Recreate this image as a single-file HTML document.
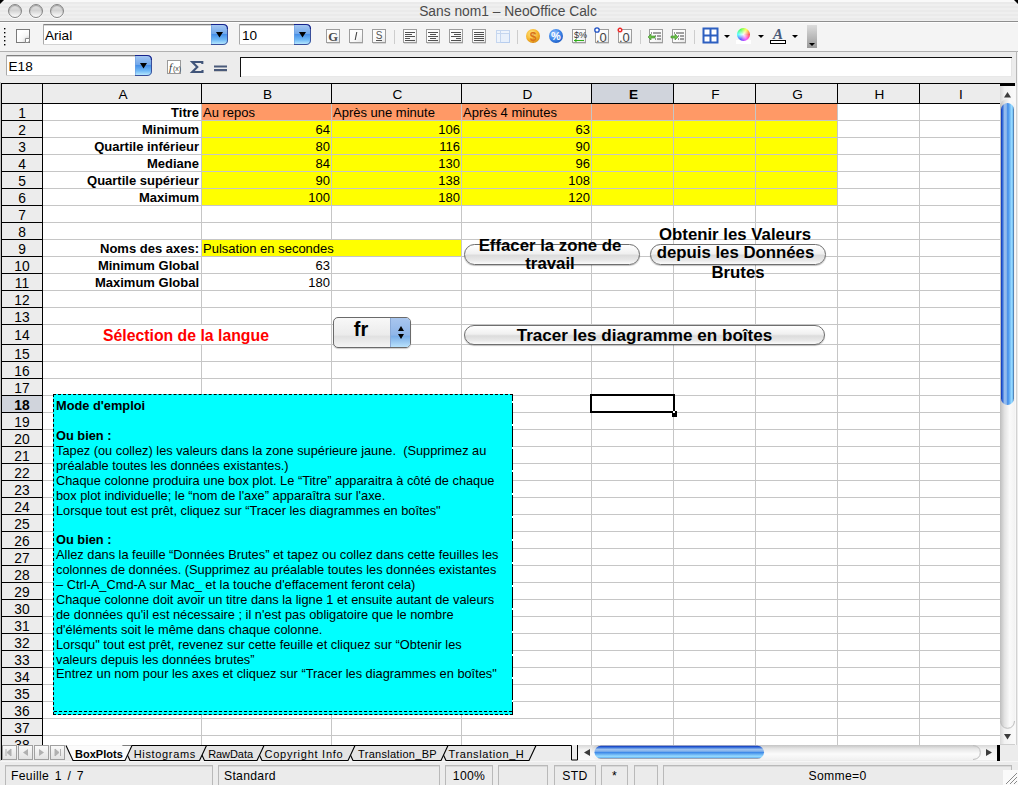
<!DOCTYPE html><html><head><meta charset="utf-8"><style>
*{margin:0;padding:0;box-sizing:border-box}
body{width:1018px;height:785px;overflow:hidden;position:relative;background:#ececec;font-family:"Liberation Sans",sans-serif;}
div,span{position:absolute}
.t{white-space:pre;line-height:17px;font-size:13px;color:#000}
.b{font-weight:bold}
.r{text-align:right}
.c{text-align:center}
.hl{background:#000}
.gl{background:#c6c6c6}
</style></head><body>
<div style="left:0;top:0;width:1018px;height:21px;background:repeating-linear-gradient(#efefef 0,#efefef 2px,#eaeaea 2px,#eaeaea 4px)"></div>
<div style="left:0;top:0;width:1018px;height:2px;background:#f9f9f9"></div>
<div style="left:0;top:21px;width:1018px;height:1px;background:#8e8e8e"></div>
<div style="left:8px;top:4px;width:14px;height:14px;border-radius:50%;background:linear-gradient(#e4e4e4 0%,#d2d2d2 45%,#e6e6e6 70%,#fbfbfb 100%);border:1px solid #858585;box-shadow:inset 0 1px 1px rgba(0,0,0,.3),0 1px 0 rgba(255,255,255,.8)"></div>
<div style="left:29px;top:4px;width:14px;height:14px;border-radius:50%;background:linear-gradient(#e4e4e4 0%,#d2d2d2 45%,#e6e6e6 70%,#fbfbfb 100%);border:1px solid #858585;box-shadow:inset 0 1px 1px rgba(0,0,0,.3),0 1px 0 rgba(255,255,255,.8)"></div>
<div style="left:50px;top:4px;width:14px;height:14px;border-radius:50%;background:linear-gradient(#e4e4e4 0%,#d2d2d2 45%,#e6e6e6 70%,#fbfbfb 100%);border:1px solid #858585;box-shadow:inset 0 1px 1px rgba(0,0,0,.3),0 1px 0 rgba(255,255,255,.8)"></div>
<div class="t" style="left:-1px;top:3px;width:1018px;text-align:center;font-size:13.8px;color:#4a4a4a">Sans nom1 – NeoOffice Calc</div>
<div style="left:0;top:0;width:0;height:0;border-top:4px solid #000;border-right:4px solid transparent"></div>
<div style="left:1014px;top:0;width:0;height:0;border-top:4px solid #000;border-left:4px solid transparent"></div>
<div style="left:0;top:22px;width:1018px;height:29px;background:#f4f4f4;border-top:1px solid #fdfdfd"></div>
<div style="left:0;top:51px;width:1018px;height:1px;background:#b0b0b0"></div>
<div style="left:0;top:52px;width:1016px;height:31px;background:#ececec"></div>
<div style="left:1016px;top:51px;width:1px;height:33px;background:#b8b8b8"></div>
<div style="left:1017px;top:52px;width:1px;height:31px;background:#f4f4f4"></div>
<svg style="position:absolute;left:0;top:0" width="1018" height="85" viewBox="0 0 1018 85" font-family="Liberation Sans"><defs><linearGradient id="aqua" x1="0" y1="0" x2="0" y2="1"><stop offset="0" stop-color="#a9c9f2"/><stop offset=".48" stop-color="#6fa6ea"/><stop offset=".5" stop-color="#4790e8"/><stop offset=".75" stop-color="#6fb8f6"/><stop offset="1" stop-color="#c6f2ff"/></linearGradient><radialGradient id="docbg" cx="1" cy="1" r="1"><stop offset="0" stop-color="#fff"/><stop offset=".35" stop-color="#dcdcdc"/><stop offset=".6" stop-color="#f6f6f6"/><stop offset="1" stop-color="#fff"/></radialGradient><linearGradient id="btnbg" x1="0" y1="0" x2="1" y2="1"><stop offset="0" stop-color="#fff"/><stop offset=".6" stop-color="#fafafa"/><stop offset="1" stop-color="#e4e4e4"/></linearGradient><radialGradient id="coin" cx=".4" cy=".35" r=".7"><stop offset="0" stop-color="#ffe98a"/><stop offset=".6" stop-color="#f7b730"/><stop offset="1" stop-color="#d88a10"/></radialGradient><radialGradient id="pct" cx=".4" cy=".35" r=".7"><stop offset="0" stop-color="#9cc6ff"/><stop offset=".6" stop-color="#3e86e8"/><stop offset="1" stop-color="#1b58c0"/></radialGradient><linearGradient id="tabg" x1="0" y1="0" x2="0" y2="1"><stop offset="0" stop-color="#dcdcdc"/><stop offset="1" stop-color="#9a9a9a"/></linearGradient><radialGradient id="wheel" cx=".35" cy=".3" r=".8"><stop offset="0" stop-color="#fff"/><stop offset=".3" stop-color="#f6c6ff"/><stop offset=".6" stop-color="#9fd6ff"/><stop offset="1" stop-color="#f0a050"/></radialGradient></defs><rect x="4" y="28" width="1.4" height="1.4" fill="#000"/><rect x="4" y="32" width="1.4" height="1.4" fill="#000"/><rect x="4" y="36" width="1.4" height="1.4" fill="#000"/><rect x="4" y="40" width="1.4" height="1.4" fill="#000"/><rect x="4" y="44" width="1.4" height="1.4" fill="#000"/><rect x="16.5" y="29.5" width="13" height="13" fill="url(#docbg)" stroke="#7a7a7a"/><path d="M25.5 42.5 V38.5 H29.5 V41 L28 42.5 Z" fill="#fff" stroke="#8a8a8a"/><rect x="43" y="24" width="168" height="21" fill="#fff"/><rect x="43" y="24" width="168" height="1" fill="#7f7f7f"/><rect x="43" y="25" width="168" height="1" fill="#d6d6d6"/><rect x="43" y="24" width="1" height="21" fill="#a9a9a9"/><rect x="43" y="44" width="168" height="1" fill="#d2d2d2"/><path d="M211 24 H223 Q228 24 228 29 V40 Q228 45 223 45 H211 Z" fill="url(#aqua)"/><path d="M211 24.5 H223 Q227.5 24.5 227.5 29" fill="none" stroke="#16238a" stroke-width="1.2"/><path d="M227.5 29 V40 Q227.5 44.5 223 44.5 H211" fill="none" stroke="#3a4f9a" stroke-width="1"/><rect x="211" y="25" width="1" height="19" fill="#6d9fe0" opacity=".6"/><path d="M216.0 32.0 H223.0 L219.5 37.5 Z" fill="#000"/><text x="45" y="39.5" font-size="13.6" fill="#000">Arial</text><rect x="239" y="24" width="55" height="21" fill="#fff"/><rect x="239" y="24" width="55" height="1" fill="#7f7f7f"/><rect x="239" y="25" width="55" height="1" fill="#d6d6d6"/><rect x="239" y="24" width="1" height="21" fill="#a9a9a9"/><rect x="239" y="44" width="55" height="1" fill="#d2d2d2"/><path d="M294 24 H306 Q311 24 311 29 V40 Q311 45 306 45 H294 Z" fill="url(#aqua)"/><path d="M294 24.5 H306 Q310.5 24.5 310.5 29" fill="none" stroke="#16238a" stroke-width="1.2"/><path d="M310.5 29 V40 Q310.5 44.5 306 44.5 H294" fill="none" stroke="#3a4f9a" stroke-width="1"/><rect x="294" y="25" width="1" height="19" fill="#6d9fe0" opacity=".6"/><path d="M299.0 32.0 H306.0 L302.5 37.5 Z" fill="#000"/><text x="242" y="39.5" font-size="13.6" fill="#000">10</text><rect x="326.5" y="29.5" width="13" height="13" fill="url(#btnbg)" stroke="#9d9d9d"/><rect x="327" y="43" width="13" height="1" fill="#000" opacity=".12"/><text x="333" y="40.5" font-size="12.5" font-weight="bold" font-family="Liberation Serif" text-anchor="middle" fill="#4a4a4a">G</text><rect x="349.5" y="29.5" width="13" height="13" fill="url(#btnbg)" stroke="#9d9d9d"/><rect x="350" y="43" width="13" height="1" fill="#000" opacity=".12"/><path d="M356.8 32 L355.2 40" stroke="#444" stroke-width="1.1"/><rect x="372.5" y="29.5" width="13" height="13" fill="url(#btnbg)" stroke="#9d9d9d"/><rect x="373" y="43" width="13" height="1" fill="#000" opacity=".12"/><text x="379" y="39" font-size="10" text-anchor="middle" fill="#555">S</text><rect x="376" y="40" width="6" height="1" fill="#555"/><rect x="394" y="30" width="1" height="14" fill="#cdcdcd"/><rect x="517" y="30" width="1" height="14" fill="#cdcdcd"/><rect x="640" y="30" width="1" height="14" fill="#cdcdcd"/><rect x="694" y="30" width="1" height="14" fill="#cdcdcd"/><rect x="403.5" y="29.5" width="13" height="13" fill="url(#btnbg)" stroke="#9d9d9d"/><rect x="404" y="43" width="13" height="1" fill="#000" opacity=".12"/><rect x="405" y="32" width="10" height="1" fill="#505050"/><rect x="405" y="34" width="7" height="1" fill="#505050"/><rect x="405" y="36" width="10" height="1" fill="#505050"/><rect x="405" y="38" width="5" height="1" fill="#505050"/><rect x="405" y="40" width="10" height="1" fill="#505050"/><rect x="426.5" y="29.5" width="13" height="13" fill="url(#btnbg)" stroke="#9d9d9d"/><rect x="427" y="43" width="13" height="1" fill="#000" opacity=".12"/><rect x="428" y="32" width="10" height="1" fill="#505050"/><rect x="430" y="34" width="6" height="1" fill="#505050"/><rect x="428" y="36" width="10" height="1" fill="#505050"/><rect x="430" y="38" width="6" height="1" fill="#505050"/><rect x="428" y="40" width="10" height="1" fill="#505050"/><rect x="449.5" y="29.5" width="13" height="13" fill="url(#btnbg)" stroke="#9d9d9d"/><rect x="450" y="43" width="13" height="1" fill="#000" opacity=".12"/><rect x="451" y="32" width="10" height="1" fill="#505050"/><rect x="454" y="34" width="7" height="1" fill="#505050"/><rect x="451" y="36" width="10" height="1" fill="#505050"/><rect x="456" y="38" width="5" height="1" fill="#505050"/><rect x="451" y="40" width="10" height="1" fill="#505050"/><rect x="472.5" y="29.5" width="13" height="13" fill="url(#btnbg)" stroke="#9d9d9d"/><rect x="473" y="43" width="13" height="1" fill="#000" opacity=".12"/><rect x="474" y="32" width="10" height="1" fill="#505050"/><rect x="474" y="34" width="10" height="1" fill="#505050"/><rect x="474" y="36" width="10" height="1" fill="#505050"/><rect x="474" y="38" width="10" height="1" fill="#505050"/><rect x="474" y="40" width="10" height="1" fill="#505050"/><rect x="496.5" y="30.5" width="13" height="12" fill="#eef4fc" stroke="#c5d6ef"/><rect x="500.5" y="33.5" width="9" height="9" fill="#e8f0fb" stroke="#b7cdee"/><path d="M496.5 33.5 H509.5 M500.5 30.5 V42.5" stroke="#c5d6ef"/><circle cx="533" cy="36" r="7" fill="url(#coin)"/><text x="533" y="40.5" font-size="12" font-weight="bold" text-anchor="middle" fill="#d8731a">$</text><circle cx="556" cy="36" r="7" fill="url(#pct)"/><text x="556" y="40" font-size="11" font-weight="bold" text-anchor="middle" fill="#fff">%</text><rect x="572.5" y="29.5" width="13" height="13" fill="url(#btnbg)" stroke="#9d9d9d"/><rect x="573" y="43" width="13" height="1" fill="#000" opacity=".12"/><text x="574" y="38" font-size="9" fill="#333">$%</text><rect x="574" y="40" width="10" height="1" fill="#2fae1a"/><path d="M574 40.5 L576.5 38.5 V42.5 Z" fill="#2fae1a"/><rect x="595.5" y="29.5" width="13" height="13" fill="url(#btnbg)" stroke="#9d9d9d"/><rect x="596" y="43" width="13" height="1" fill="#000" opacity=".12"/><text x="596" y="41.5" font-size="13" fill="#444">.0</text><circle cx="597" cy="30" r="2.2" fill="#fff" stroke="#1d4fc4" stroke-width="1.3"/><rect x="618.5" y="29.5" width="13" height="13" fill="url(#btnbg)" stroke="#9d9d9d"/><rect x="619" y="43" width="13" height="1" fill="#000" opacity=".12"/><text x="619" y="41.5" font-size="13" fill="#444">.0</text><circle cx="620" cy="30" r="2.5" fill="#e22"/><path d="M618.8 28.8 L621.2 31.2 M621.2 28.8 L618.8 31.2" stroke="#fff" stroke-width=".8"/><rect x="649.5" y="29.5" width="13" height="13" fill="url(#btnbg)" stroke="#9d9d9d"/><rect x="650" y="43" width="13" height="1" fill="#000" opacity=".12"/><rect x="651" y="32.5" width="1" height="1" fill="#333"/><rect x="653" y="32.5" width="8" height="1" fill="#444"/><rect x="655" y="35.5" width="1" height="1" fill="#333"/><rect x="657" y="35.5" width="4" height="1" fill="#444"/><rect x="655" y="38.5" width="1" height="1" fill="#333"/><rect x="657" y="38.5" width="4" height="1" fill="#444"/><path d="M655 36 H651 V34 L648 37 L651 40 V38 H655 Z" fill="#6cc24a" stroke="#3e8a2a" stroke-width=".6"/><rect x="672.5" y="29.5" width="13" height="13" fill="url(#btnbg)" stroke="#9d9d9d"/><rect x="673" y="43" width="13" height="1" fill="#000" opacity=".12"/><rect x="674" y="32.5" width="1" height="1" fill="#333"/><rect x="676" y="32.5" width="8" height="1" fill="#444"/><rect x="678" y="35.5" width="1" height="1" fill="#333"/><rect x="680" y="35.5" width="4" height="1" fill="#444"/><rect x="678" y="38.5" width="1" height="1" fill="#333"/><rect x="680" y="38.5" width="4" height="1" fill="#444"/><path d="M671 36 H675 V34 L678 37 L675 40 V38 H671 Z" fill="#6cc24a" stroke="#3e8a2a" stroke-width=".6"/><rect x="703.5" y="28.5" width="14" height="14" fill="#fff" stroke="#2d5fc0" stroke-width="2"/><path d="M710.5 28 V43 M703 35.5 H718" stroke="#2d5fc0" stroke-width="2"/><path d="M724 35 H730 L727 38 Z" fill="#000"/><path d="M758 35 H764 L761 38 Z" fill="#000"/><path d="M792 35 H798 L795 38 Z" fill="#000"/><rect x="736" y="40" width="15" height="4" fill="#fff"/><text x="778" y="39" font-size="15" font-style="italic" font-weight="bold" font-family="Liberation Serif" text-anchor="middle" fill="#4a5a78">A</text><rect x="770.5" y="40.5" width="15" height="3" fill="#fff" stroke="#000"/><rect x="807" y="25" width="10" height="23" fill="url(#tabg)"/><path d="M809 43 H815 L812 46 Z" fill="#000"/><rect x="6" y="55" width="129" height="21" fill="#fff"/><rect x="6" y="55" width="129" height="1" fill="#7f7f7f"/><rect x="6" y="56" width="129" height="1" fill="#d6d6d6"/><rect x="6" y="55" width="1" height="21" fill="#a9a9a9"/><rect x="6" y="75" width="129" height="1" fill="#d2d2d2"/><path d="M135 55 H147 Q152 55 152 60 V71 Q152 76 147 76 H135 Z" fill="url(#aqua)"/><path d="M135 55.5 H147 Q151.5 55.5 151.5 60" fill="none" stroke="#16238a" stroke-width="1.2"/><path d="M151.5 60 V71 Q151.5 75.5 147 75.5 H135" fill="none" stroke="#3a4f9a" stroke-width="1"/><rect x="135" y="56" width="1" height="19" fill="#6d9fe0" opacity=".6"/><path d="M140.0 63.0 H147.0 L143.5 68.5 Z" fill="#000"/><text x="8.5" y="70.5" font-size="13.6" fill="#000">E18</text><rect x="167.5" y="60.5" width="13" height="13" fill="#fff" stroke="#9a9a9a"/><text x="169" y="71" font-size="11" font-style="italic" font-family="Liberation Serif" fill="#333">f</text><text x="173" y="70.5" font-size="7" fill="#444">(x)</text><path d="M202.3 64 V62 H192.3 L197.3 67 L192.3 72 H202.5 V70" fill="none" stroke="#41557a" stroke-width="2.1" stroke-linejoin="miter"/><rect x="214" y="65.5" width="13" height="2" fill="#4a5a7a"/><rect x="214" y="69" width="13" height="2" fill="#4a5a7a"/><rect x="214" y="71" width="13" height="1" fill="#c8c8c8"/><rect x="240" y="57" width="772" height="20" fill="#fff"/><rect x="240" y="57" width="772" height="1" fill="#111"/><rect x="240" y="57" width="1" height="20" fill="#111"/><rect x="1011" y="58" width="1" height="19" fill="#e4e4e4"/><rect x="241" y="76" width="771" height="1" fill="#e8e8e8"/></svg>
<div style="left:736.5px;top:27.5px;width:13px;height:13px;border-radius:50%;background:conic-gradient(from 90deg,#ff4040,#ff40ff,#4040ff,#40ffff,#40ff40,#ffff40,#ff4040)"></div>
<div style="left:736.5px;top:27.5px;width:13px;height:13px;border-radius:50%;background:radial-gradient(circle at 50% 50%,rgba(255,255,255,.95) 0,rgba(255,255,255,.5) 35%,rgba(255,255,255,0) 70%,rgba(0,0,0,.12) 100%)"></div>
<div style="left:1px;top:83px;width:999px;height:21px;background:#ececec"></div>
<div style="left:1px;top:103px;width:42px;height:642px;background:#ececec"></div>
<div style="left:43px;top:104px;width:957px;height:641px;background:#fff"></div>
<div style="left:592px;top:84px;width:81px;height:19px;background:#d0d4dc"></div>
<div style="left:2px;top:396px;width:40px;height:16px;background:#d0d4dc"></div>
<div style="left:201px;top:103px;width:636px;height:17px;background:#ff9966"></div>
<div style="left:201px;top:120px;width:636px;height:85px;background:#ffff00"></div>
<div style="left:201px;top:239px;width:260px;height:17px;background:#ffff00"></div>
<div class="gl" style="left:43px;top:120px;width:957px;height:1px"></div>
<div class="gl" style="left:43px;top:137px;width:957px;height:1px"></div>
<div class="gl" style="left:43px;top:154px;width:957px;height:1px"></div>
<div class="gl" style="left:43px;top:171px;width:957px;height:1px"></div>
<div class="gl" style="left:43px;top:188px;width:957px;height:1px"></div>
<div class="gl" style="left:43px;top:205px;width:957px;height:1px"></div>
<div class="gl" style="left:43px;top:222px;width:957px;height:1px"></div>
<div class="gl" style="left:43px;top:239px;width:957px;height:1px"></div>
<div class="gl" style="left:43px;top:256px;width:957px;height:1px"></div>
<div class="gl" style="left:43px;top:273px;width:957px;height:1px"></div>
<div class="gl" style="left:43px;top:290px;width:957px;height:1px"></div>
<div class="gl" style="left:43px;top:307px;width:957px;height:1px"></div>
<div class="gl" style="left:43px;top:324px;width:957px;height:1px"></div>
<div class="gl" style="left:43px;top:344px;width:957px;height:1px"></div>
<div class="gl" style="left:43px;top:361px;width:957px;height:1px"></div>
<div class="gl" style="left:43px;top:378px;width:957px;height:1px"></div>
<div class="gl" style="left:43px;top:395px;width:957px;height:1px"></div>
<div class="gl" style="left:43px;top:412px;width:957px;height:1px"></div>
<div class="gl" style="left:43px;top:429px;width:957px;height:1px"></div>
<div class="gl" style="left:43px;top:446px;width:957px;height:1px"></div>
<div class="gl" style="left:43px;top:463px;width:957px;height:1px"></div>
<div class="gl" style="left:43px;top:480px;width:957px;height:1px"></div>
<div class="gl" style="left:43px;top:497px;width:957px;height:1px"></div>
<div class="gl" style="left:43px;top:514px;width:957px;height:1px"></div>
<div class="gl" style="left:43px;top:531px;width:957px;height:1px"></div>
<div class="gl" style="left:43px;top:548px;width:957px;height:1px"></div>
<div class="gl" style="left:43px;top:565px;width:957px;height:1px"></div>
<div class="gl" style="left:43px;top:582px;width:957px;height:1px"></div>
<div class="gl" style="left:43px;top:599px;width:957px;height:1px"></div>
<div class="gl" style="left:43px;top:616px;width:957px;height:1px"></div>
<div class="gl" style="left:43px;top:633px;width:957px;height:1px"></div>
<div class="gl" style="left:43px;top:650px;width:957px;height:1px"></div>
<div class="gl" style="left:43px;top:667px;width:957px;height:1px"></div>
<div class="gl" style="left:43px;top:684px;width:957px;height:1px"></div>
<div class="gl" style="left:43px;top:701px;width:957px;height:1px"></div>
<div class="gl" style="left:43px;top:718px;width:957px;height:1px"></div>
<div class="gl" style="left:43px;top:735px;width:957px;height:1px"></div>
<div class="gl" style="left:201px;top:104px;width:1px;height:641px"></div>
<div class="gl" style="left:331px;top:104px;width:1px;height:641px"></div>
<div class="gl" style="left:461px;top:104px;width:1px;height:641px"></div>
<div class="gl" style="left:591px;top:104px;width:1px;height:641px"></div>
<div class="gl" style="left:673px;top:104px;width:1px;height:641px"></div>
<div class="gl" style="left:755px;top:104px;width:1px;height:641px"></div>
<div class="gl" style="left:837px;top:104px;width:1px;height:641px"></div>
<div class="gl" style="left:919px;top:104px;width:1px;height:641px"></div>
<div style="left:201px;top:325px;width:1px;height:19px;background:#fff"></div>
<div style="left:331px;top:240px;width:1px;height:16px;background:#ffff00"></div>
<div style="left:0;top:82px;width:1px;height:679px;background:#c2c2c2"></div>
<div class="hl" style="left:1px;top:83px;width:999px;height:1px"></div>
<div class="hl" style="left:1px;top:103px;width:999px;height:1px"></div>
<div class="hl" style="left:1px;top:83px;width:1px;height:662px"></div>
<div class="hl" style="left:42px;top:83px;width:1px;height:21px"></div>
<div class="hl" style="left:201px;top:83px;width:1px;height:21px"></div>
<div class="hl" style="left:331px;top:83px;width:1px;height:21px"></div>
<div class="hl" style="left:461px;top:83px;width:1px;height:21px"></div>
<div class="hl" style="left:591px;top:83px;width:1px;height:21px"></div>
<div class="hl" style="left:673px;top:83px;width:1px;height:21px"></div>
<div class="hl" style="left:755px;top:83px;width:1px;height:21px"></div>
<div class="hl" style="left:837px;top:83px;width:1px;height:21px"></div>
<div class="hl" style="left:919px;top:83px;width:1px;height:21px"></div>
<div class="hl" style="left:42px;top:103px;width:1px;height:642px"></div>
<div class="hl" style="left:1px;top:120px;width:42px;height:1px"></div>
<div class="hl" style="left:1px;top:137px;width:42px;height:1px"></div>
<div class="hl" style="left:1px;top:154px;width:42px;height:1px"></div>
<div class="hl" style="left:1px;top:171px;width:42px;height:1px"></div>
<div class="hl" style="left:1px;top:188px;width:42px;height:1px"></div>
<div class="hl" style="left:1px;top:205px;width:42px;height:1px"></div>
<div class="hl" style="left:1px;top:222px;width:42px;height:1px"></div>
<div class="hl" style="left:1px;top:239px;width:42px;height:1px"></div>
<div class="hl" style="left:1px;top:256px;width:42px;height:1px"></div>
<div class="hl" style="left:1px;top:273px;width:42px;height:1px"></div>
<div class="hl" style="left:1px;top:290px;width:42px;height:1px"></div>
<div class="hl" style="left:1px;top:307px;width:42px;height:1px"></div>
<div class="hl" style="left:1px;top:324px;width:42px;height:1px"></div>
<div class="hl" style="left:1px;top:344px;width:42px;height:1px"></div>
<div class="hl" style="left:1px;top:361px;width:42px;height:1px"></div>
<div class="hl" style="left:1px;top:378px;width:42px;height:1px"></div>
<div class="hl" style="left:1px;top:395px;width:42px;height:1px"></div>
<div class="hl" style="left:1px;top:412px;width:42px;height:1px"></div>
<div class="hl" style="left:1px;top:429px;width:42px;height:1px"></div>
<div class="hl" style="left:1px;top:446px;width:42px;height:1px"></div>
<div class="hl" style="left:1px;top:463px;width:42px;height:1px"></div>
<div class="hl" style="left:1px;top:480px;width:42px;height:1px"></div>
<div class="hl" style="left:1px;top:497px;width:42px;height:1px"></div>
<div class="hl" style="left:1px;top:514px;width:42px;height:1px"></div>
<div class="hl" style="left:1px;top:531px;width:42px;height:1px"></div>
<div class="hl" style="left:1px;top:548px;width:42px;height:1px"></div>
<div class="hl" style="left:1px;top:565px;width:42px;height:1px"></div>
<div class="hl" style="left:1px;top:582px;width:42px;height:1px"></div>
<div class="hl" style="left:1px;top:599px;width:42px;height:1px"></div>
<div class="hl" style="left:1px;top:616px;width:42px;height:1px"></div>
<div class="hl" style="left:1px;top:633px;width:42px;height:1px"></div>
<div class="hl" style="left:1px;top:650px;width:42px;height:1px"></div>
<div class="hl" style="left:1px;top:667px;width:42px;height:1px"></div>
<div class="hl" style="left:1px;top:684px;width:42px;height:1px"></div>
<div class="hl" style="left:1px;top:701px;width:42px;height:1px"></div>
<div class="hl" style="left:1px;top:718px;width:42px;height:1px"></div>
<div class="hl" style="left:1px;top:735px;width:42px;height:1px"></div>
<div class="t c" style="left:44px;top:86px;width:158px;font-size:13.6px">A</div>
<div class="t c" style="left:203px;top:86px;width:129px;font-size:13.6px">B</div>
<div class="t c" style="left:333px;top:86px;width:129px;font-size:13.6px">C</div>
<div class="t c" style="left:463px;top:86px;width:129px;font-size:13.6px">D</div>
<div class="t c b" style="left:593px;top:86px;width:81px;font-size:13.6px">E</div>
<div class="t c" style="left:675px;top:86px;width:81px;font-size:13.6px">F</div>
<div class="t c" style="left:757px;top:86px;width:81px;font-size:13.6px">G</div>
<div class="t c" style="left:839px;top:86px;width:81px;font-size:13.6px">H</div>
<div class="t c" style="left:921px;top:86px;width:80px;font-size:13.6px">I</div>
<div class="t c" style="left:2px;top:104.5px;width:40px;font-size:13.8px">1</div>
<div class="t c" style="left:2px;top:121.5px;width:40px;font-size:13.8px">2</div>
<div class="t c" style="left:2px;top:138.5px;width:40px;font-size:13.8px">3</div>
<div class="t c" style="left:2px;top:155.5px;width:40px;font-size:13.8px">4</div>
<div class="t c" style="left:2px;top:172.5px;width:40px;font-size:13.8px">5</div>
<div class="t c" style="left:2px;top:189.5px;width:40px;font-size:13.8px">6</div>
<div class="t c" style="left:2px;top:206.5px;width:40px;font-size:13.8px">7</div>
<div class="t c" style="left:2px;top:223.5px;width:40px;font-size:13.8px">8</div>
<div class="t c" style="left:2px;top:240.5px;width:40px;font-size:13.8px">9</div>
<div class="t c" style="left:2px;top:257.5px;width:40px;font-size:13.8px">10</div>
<div class="t c" style="left:2px;top:274.5px;width:40px;font-size:13.8px">11</div>
<div class="t c" style="left:2px;top:291.5px;width:40px;font-size:13.8px">12</div>
<div class="t c" style="left:2px;top:308.5px;width:40px;font-size:13.8px">13</div>
<div class="t c" style="left:2px;top:326.5px;width:40px;font-size:13.8px">14</div>
<div class="t c" style="left:2px;top:345.5px;width:40px;font-size:13.8px">15</div>
<div class="t c" style="left:2px;top:362.5px;width:40px;font-size:13.8px">16</div>
<div class="t c" style="left:2px;top:379.5px;width:40px;font-size:13.8px">17</div>
<div class="t c b" style="left:2px;top:396.5px;width:40px;font-size:13.8px">18</div>
<div class="t c" style="left:2px;top:413.5px;width:40px;font-size:13.8px">19</div>
<div class="t c" style="left:2px;top:430.5px;width:40px;font-size:13.8px">20</div>
<div class="t c" style="left:2px;top:447.5px;width:40px;font-size:13.8px">21</div>
<div class="t c" style="left:2px;top:464.5px;width:40px;font-size:13.8px">22</div>
<div class="t c" style="left:2px;top:481.5px;width:40px;font-size:13.8px">23</div>
<div class="t c" style="left:2px;top:498.5px;width:40px;font-size:13.8px">24</div>
<div class="t c" style="left:2px;top:515.5px;width:40px;font-size:13.8px">25</div>
<div class="t c" style="left:2px;top:532.5px;width:40px;font-size:13.8px">26</div>
<div class="t c" style="left:2px;top:549.5px;width:40px;font-size:13.8px">27</div>
<div class="t c" style="left:2px;top:566.5px;width:40px;font-size:13.8px">28</div>
<div class="t c" style="left:2px;top:583.5px;width:40px;font-size:13.8px">29</div>
<div class="t c" style="left:2px;top:600.5px;width:40px;font-size:13.8px">30</div>
<div class="t c" style="left:2px;top:617.5px;width:40px;font-size:13.8px">31</div>
<div class="t c" style="left:2px;top:634.5px;width:40px;font-size:13.8px">32</div>
<div class="t c" style="left:2px;top:651.5px;width:40px;font-size:13.8px">33</div>
<div class="t c" style="left:2px;top:668.5px;width:40px;font-size:13.8px">34</div>
<div class="t c" style="left:2px;top:685.5px;width:40px;font-size:13.8px">35</div>
<div class="t c" style="left:2px;top:702.5px;width:40px;font-size:13.8px">36</div>
<div class="t c" style="left:2px;top:719.5px;width:40px;font-size:13.8px">37</div>
<div class="t c" style="left:2px;top:736.5px;width:40px;font-size:13.8px">38</div>
<div class="t b" style="top:104px;left:42px;width:157px;text-align:right;">Titre</div>
<div class="t b" style="top:121px;left:42px;width:157px;text-align:right;">Minimum</div>
<div class="t b" style="top:138px;left:42px;width:157px;text-align:right;">Quartile inférieur</div>
<div class="t b" style="top:155px;left:42px;width:157px;text-align:right;">Mediane</div>
<div class="t b" style="top:172px;left:42px;width:157px;text-align:right;">Quartile supérieur</div>
<div class="t b" style="top:189px;left:42px;width:157px;text-align:right;">Maximum</div>
<div class="t" style="top:104px;left:203px;">Au repos</div>
<div class="t" style="top:104px;left:333px;">Après une minute</div>
<div class="t" style="top:104px;left:463px;">Après 4 minutes</div>
<div class="t" style="top:121px;left:201px;width:129px;text-align:right;">64</div>
<div class="t" style="top:121px;left:331px;width:129px;text-align:right;">106</div>
<div class="t" style="top:121px;left:461px;width:129px;text-align:right;">63</div>
<div class="t" style="top:138px;left:201px;width:129px;text-align:right;">80</div>
<div class="t" style="top:138px;left:331px;width:129px;text-align:right;">116</div>
<div class="t" style="top:138px;left:461px;width:129px;text-align:right;">90</div>
<div class="t" style="top:155px;left:201px;width:129px;text-align:right;">84</div>
<div class="t" style="top:155px;left:331px;width:129px;text-align:right;">130</div>
<div class="t" style="top:155px;left:461px;width:129px;text-align:right;">96</div>
<div class="t" style="top:172px;left:201px;width:129px;text-align:right;">90</div>
<div class="t" style="top:172px;left:331px;width:129px;text-align:right;">138</div>
<div class="t" style="top:172px;left:461px;width:129px;text-align:right;">108</div>
<div class="t" style="top:189px;left:201px;width:129px;text-align:right;">100</div>
<div class="t" style="top:189px;left:331px;width:129px;text-align:right;">180</div>
<div class="t" style="top:189px;left:461px;width:129px;text-align:right;">120</div>
<div class="t b" style="top:240px;left:42px;width:157px;text-align:right;">Noms des axes:</div>
<div class="t" style="top:240px;left:203px;">Pulsation en secondes</div>
<div class="t b" style="top:257px;left:42px;width:157px;text-align:right;">Minimum Global</div>
<div class="t" style="top:257px;left:201px;width:129px;text-align:right;">63</div>
<div class="t b" style="top:274px;left:42px;width:157px;text-align:right;">Maximum Global</div>
<div class="t" style="top:274px;left:201px;width:129px;text-align:right;">180</div>
<svg style="position:absolute;left:0;top:0" width="1018" height="785" viewBox="0 0 1018 785" font-family="Liberation Sans"><defs><linearGradient id="vtrack" x1="0" y1="0" x2="1" y2="0"><stop offset="0" stop-color="#bdbdbd"/><stop offset=".3" stop-color="#e2e2e2"/><stop offset=".65" stop-color="#fafafa"/><stop offset="1" stop-color="#f2f2f2"/></linearGradient><linearGradient id="htrack" x1="0" y1="0" x2="0" y2="1"><stop offset="0" stop-color="#c4c4c4"/><stop offset=".25" stop-color="#e6e6e6"/><stop offset=".6" stop-color="#fbfbfb"/><stop offset="1" stop-color="#f0f0f0"/></linearGradient><linearGradient id="vthumb" x1="0" y1="0" x2="1" y2="0"><stop offset="0" stop-color="#0a30b8"/><stop offset=".13" stop-color="#3a72da"/><stop offset=".28" stop-color="#9dc1ee"/><stop offset=".42" stop-color="#86b4ec"/><stop offset=".52" stop-color="#3f8ae8"/><stop offset=".82" stop-color="#98dcff"/><stop offset=".93" stop-color="#6cb8f4"/><stop offset="1" stop-color="#3c4a6a"/></linearGradient><linearGradient id="hthumb" x1="0" y1="0" x2="0" y2="1"><stop offset="0" stop-color="#0a30b8"/><stop offset=".13" stop-color="#3a72da"/><stop offset=".28" stop-color="#9dc1ee"/><stop offset=".42" stop-color="#86b4ec"/><stop offset=".52" stop-color="#3f8ae8"/><stop offset=".82" stop-color="#98dcff"/><stop offset=".93" stop-color="#6cb8f4"/><stop offset="1" stop-color="#3c4a6a"/></linearGradient><linearGradient id="varr" x1="0" y1="0" x2="1" y2="0"><stop offset="0" stop-color="#d8d8d8"/><stop offset=".3" stop-color="#f2f2f2"/><stop offset="1" stop-color="#fafafa"/></linearGradient><linearGradient id="harr" x1="0" y1="0" x2="0" y2="1"><stop offset="0" stop-color="#d8d8d8"/><stop offset=".3" stop-color="#f2f2f2"/><stop offset="1" stop-color="#fafafa"/></linearGradient><linearGradient id="navb" x1="0" y1="0" x2="0" y2="1"><stop offset="0" stop-color="#fafafa"/><stop offset="1" stop-color="#e2e2e2"/></linearGradient></defs><rect x="1000" y="86" width="15" height="659" fill="url(#varr)"/><rect x="1000" y="99" width="15" height="629" rx="7.5" fill="url(#vtrack)"/><path d="M1000.5 721 Q1001 728 1007.5 728.3 Q1014 728 1014.5 721" fill="none" stroke="#bdbdbd" stroke-width="1"/><rect x="1015" y="86" width="1" height="659" fill="#f8f8f8"/><rect x="1016" y="83" width="1" height="662" fill="#d2d2d2"/><rect x="1000" y="744" width="15" height="1" fill="#cfcfcf"/><rect x="1000" y="83" width="15" height="3" fill="#000"/><path d="M1004 97.5 H1011 L1007.5 92 Z" fill="#3c3c3c"/><path d="M1004 734 H1011 L1007.5 739.5 Z" fill="#3c3c3c"/><rect x="1001" y="103" width="13" height="302" rx="6.5" fill="url(#vthumb)"/><rect x="0" y="745" width="1018" height="16" fill="#ececec"/><rect x="1" y="745" width="1" height="15" fill="#000"/><rect x="0" y="745" width="1" height="16" fill="#c2c2c2"/><rect x="2.5" y="745.5" width="14" height="14" fill="url(#navb)" stroke="#a0a0a0"/><rect x="18.5" y="745.5" width="14" height="14" fill="url(#navb)" stroke="#a0a0a0"/><rect x="34.5" y="745.5" width="14" height="14" fill="url(#navb)" stroke="#a0a0a0"/><rect x="50.5" y="745.5" width="14" height="14" fill="url(#navb)" stroke="#a0a0a0"/><path d="M6 749 V756 M7 752.5 L11 749 V756 Z" stroke="#b0b0b0" fill="#b0b0b0"/><path d="M28 749 V756 L23 752.5 Z" fill="#b0b0b0"/><path d="M39 749 V756 L44 752.5 Z" fill="#b0b0b0"/><path d="M55 749 V756 L59 752.5 Z M60.5 749 V756" stroke="#b0b0b0" fill="#b0b0b0"/><path d="M439 745.5 L446 760.5 H529 L536 745.5 Z" fill="#e4e4e4"/><path d="M439 745.5 L446 760.5 H529 L536 745.5 Z" fill="none" stroke="#000" stroke-width="1.1"/><text x="448.5" y="757.7" font-size="11" textLength="75.3" lengthAdjust="spacing" fill="#000">Translation_H</text><path d="M346 745.5 L353 760.5 H441 L448 745.5 Z" fill="#e4e4e4"/><path d="M346 745.5 L353 760.5 H441 L448 745.5 Z" fill="none" stroke="#000" stroke-width="1.1"/><text x="358.1" y="757.7" font-size="11" textLength="78.5" lengthAdjust="spacing" fill="#000">Translation_BP</text><path d="M255 745.5 L262 760.5 H348 L355 745.5 Z" fill="#e4e4e4"/><path d="M255 745.5 L262 760.5 H348 L355 745.5 Z" fill="none" stroke="#000" stroke-width="1.1"/><text x="264.5" y="757.7" font-size="11" textLength="78.2" lengthAdjust="spacing" fill="#000">Copyright Info</text><path d="M197.5 745.5 L204.5 760.5 H257 L264 745.5 Z" fill="#e4e4e4"/><path d="M197.5 745.5 L204.5 760.5 H257 L264 745.5 Z" fill="none" stroke="#000" stroke-width="1.1"/><text x="208.2" y="757.7" font-size="11" textLength="44.8" lengthAdjust="spacing" fill="#000">RawData</text><path d="M123 745.5 L130 760.5 H199.5 L206.5 745.5 Z" fill="#e4e4e4"/><path d="M123 745.5 L130 760.5 H199.5 L206.5 745.5 Z" fill="none" stroke="#000" stroke-width="1.1"/><text x="133.7" y="757.7" font-size="11" textLength="61.6" lengthAdjust="spacing" fill="#000">Histograms</text><path d="M536 745.5 H571.5 V760 H577.5 V745" fill="none" stroke="#000" stroke-width="1"/><path d="M66 745.5 L73 760.5 H125 L132 745.5 Z" fill="#fbfbfb"/><path d="M66 745.5 L73 760.5 H125 L132 745.5" fill="none" stroke="#000" stroke-width="1.1"/><text x="75" y="757.7" font-size="11" font-weight="bold" textLength="47.8" lengthAdjust="spacing" fill="#000">BoxPlots</text><rect x="578" y="745" width="419" height="15" fill="url(#harr)"/><rect x="591" y="745" width="389" height="15" rx="7.5" fill="url(#htrack)"/><path d="M973 745.5 Q980.3 746 980.3 752.5 Q980.3 759 973 759.5" fill="none" stroke="#bdbdbd" stroke-width="1"/><path d="M590 749 V756 L584 752.5 Z" fill="#3c3c3c"/><path d="M986 749 V756 L992 752.5 Z" fill="#3c3c3c"/><rect x="594.5" y="745.8" width="169.5" height="12.8" rx="6.4" fill="url(#hthumb)"/><rect x="997" y="745" width="3" height="16" fill="#000"/><rect x="0" y="761" width="1018" height="24" fill="#ececec"/><rect x="0" y="761" width="1018" height="1" fill="#f6f6f6"/><rect x="5.5" y="765.5" width="207" height="25" fill="#ebebeb" stroke="#b9b9b9"/><rect x="6" y="766" width="206" height="1" fill="#d8d8d8"/><text x="11" y="780" font-size="12.2" letter-spacing=".3" word-spacing="2" text-anchor="start" fill="#000">Feuille 1 / 7</text><rect x="218.5" y="765.5" width="221" height="25" fill="#ebebeb" stroke="#b9b9b9"/><rect x="219" y="766" width="220" height="1" fill="#d8d8d8"/><text x="224" y="780" font-size="12.2" letter-spacing=".3" word-spacing="2" text-anchor="start" fill="#000">Standard</text><rect x="445.5" y="765.5" width="47" height="25" fill="#ebebeb" stroke="#b9b9b9"/><rect x="446" y="766" width="46" height="1" fill="#d8d8d8"/><text x="469.0" y="780" font-size="12.2" letter-spacing=".3" word-spacing="2" text-anchor="middle" fill="#000">100%</text><rect x="498.5" y="765.5" width="49" height="25" fill="#ebebeb" stroke="#b9b9b9"/><rect x="499" y="766" width="48" height="1" fill="#d8d8d8"/><rect x="554.5" y="765.5" width="41" height="25" fill="#ebebeb" stroke="#b9b9b9"/><rect x="555" y="766" width="40" height="1" fill="#d8d8d8"/><text x="575.0" y="780" font-size="12.2" letter-spacing=".3" word-spacing="2" text-anchor="middle" fill="#000">STD</text><rect x="601.5" y="765.5" width="26" height="25" fill="#ebebeb" stroke="#b9b9b9"/><rect x="602" y="766" width="25" height="1" fill="#d8d8d8"/><text x="614.5" y="780" font-size="12.2" letter-spacing=".3" word-spacing="2" text-anchor="middle" fill="#000">*</text><rect x="634.5" y="765.5" width="23" height="25" fill="#ebebeb" stroke="#b9b9b9"/><rect x="635" y="766" width="22" height="1" fill="#d8d8d8"/><rect x="663.5" y="765.5" width="348" height="25" fill="#ebebeb" stroke="#b9b9b9"/><rect x="664" y="766" width="347" height="1" fill="#d8d8d8"/><text x="837.5" y="780" font-size="12.2" letter-spacing=".3" word-spacing="2" text-anchor="middle" fill="#000">Somme=0</text><rect x="1003" y="770" width="15" height="15" fill="#fafafa"/><path d="M1006 784 L1017 773 M1010 784 L1017 777 M1014 784 L1017 781" stroke="#8a8a8a" stroke-width="1"/></svg>
<div style="left:464px;top:244px;width:176px;height:21px;background:linear-gradient(#ffffff 0%,#f0f0f0 45%,#dcdcdc 55%,#e8e8e8 80%,#fbfbfb 100%);border:1px solid #6e6e6e;border-radius:11px;box-shadow:0 1px 1px rgba(0,0,0,.25)"></div>
<div style="left:650px;top:244px;width:176px;height:21px;background:linear-gradient(#ffffff 0%,#f0f0f0 45%,#dcdcdc 55%,#e8e8e8 80%,#fbfbfb 100%);border:1px solid #6e6e6e;border-radius:11px;box-shadow:0 1px 1px rgba(0,0,0,.25)"></div>
<div style="left:464px;top:325px;width:361px;height:20px;background:linear-gradient(#ffffff 0%,#f0f0f0 45%,#dcdcdc 55%,#e8e8e8 80%,#fbfbfb 100%);border:1px solid #6e6e6e;border-radius:11px;box-shadow:0 1px 1px rgba(0,0,0,.25)"></div>
<div style="left:400px;top:236.8px;width:300px;font-weight:bold;font-size:16.8px;color:#000;text-align:center;white-space:pre;line-height:18px">Effacer la zone de</div>
<div style="left:400px;top:254.8px;width:300px;font-weight:bold;font-size:16.8px;color:#000;text-align:center;white-space:pre;line-height:18px">travail</div>
<div style="left:585px;top:226.4px;width:300px;font-weight:bold;font-size:16.8px;color:#000;text-align:center;white-space:pre;line-height:18px">Obtenir les Valeurs</div>
<div style="left:585.5px;top:244.1px;width:300px;font-weight:bold;font-size:16.8px;color:#000;text-align:center;white-space:pre;line-height:18px">depuis les Données</div>
<div style="left:588px;top:263.8px;width:300px;font-weight:bold;font-size:16.8px;color:#000;text-align:center;white-space:pre;line-height:18px">Brutes</div>
<div style="left:464px;top:326.8px;width:361px;font-weight:bold;font-size:16.8px;color:#000;text-align:center;white-space:pre;line-height:18px;font-size:17.1px">Tracer les diagramme en boîtes</div>
<div style="left:103px;top:326.7px;font-weight:bold;font-size:15.8px;color:#ff0000;white-space:pre;line-height:18px">Sélection de la langue</div>
<div style="left:333px;top:317px;width:78px;height:31px;border:1px solid #6a6a6a;border-radius:5px;background:linear-gradient(#f8f8f8 0%,#ebebeb 60%,#e0e0e0 61%,#f4f4f4 100%);overflow:hidden;box-shadow:0 1px 1px rgba(0,0,0,.2)"><div style="left:56px;top:-1px;width:21px;height:30px;background:linear-gradient(#a9c6ee 0%,#8eb5e8 60%,#76aae6 61%,#b9e2fc 100%);border-left:1px solid #8aaad8;border-right:1px solid #2c49a4;border-top:1px solid #23379a"></div><div style="left:64px;top:8px;width:0;height:0;border-left:3px solid transparent;border-right:3px solid transparent;border-bottom:5px solid #000"></div><div style="left:64px;top:16px;width:0;height:0;border-left:3px solid transparent;border-right:3px solid transparent;border-top:5px solid #000"></div></div>
<div style="left:333px;top:317.5px;width:56px;text-align:center;font-weight:bold;font-size:20px;line-height:22px;color:#000">fr</div>
<div style="left:53px;top:394px;width:460px;height:321px;background:#00ffff;border:1px dashed #000"></div>
<div style="left:56px;top:398.2px;font-size:12.8px;line-height:15px;white-space:pre;font-weight:bold;color:#000">Mode d&#x27;emploi</div>
<div style="left:56px;top:428.0px;font-size:12.8px;line-height:15px;white-space:pre;font-weight:bold;color:#000">Ou bien :</div>
<div style="left:56px;top:442.9px;font-size:12.8px;line-height:15px;white-space:pre;color:#000">Tapez (ou collez) les valeurs dans la zone supérieure jaune.  (Supprimez au</div>
<div style="left:56px;top:457.8px;font-size:12.8px;line-height:15px;white-space:pre;color:#000">préalable toutes les données existantes.)</div>
<div style="left:56px;top:472.7px;font-size:12.8px;line-height:15px;white-space:pre;color:#000">Chaque colonne produira une box plot. Le “Titre” apparaitra à côté de chaque</div>
<div style="left:56px;top:487.6px;font-size:12.8px;line-height:15px;white-space:pre;color:#000">box plot individuelle; le “nom de l&#x27;axe” apparaîtra sur l&#x27;axe.</div>
<div style="left:56px;top:502.5px;font-size:12.8px;line-height:15px;white-space:pre;color:#000">Lorsque tout est prêt, cliquez sur “Tracer les diagrammes en boîtes&quot;</div>
<div style="left:56px;top:532.3px;font-size:12.8px;line-height:15px;white-space:pre;font-weight:bold;color:#000">Ou bien :</div>
<div style="left:56px;top:547.2px;font-size:12.8px;line-height:15px;white-space:pre;color:#000">Allez dans la feuille “Données Brutes” et tapez ou collez dans cette feuilles les</div>
<div style="left:56px;top:562.1px;font-size:12.8px;line-height:15px;white-space:pre;color:#000">colonnes de données. (Supprimez au préalable toutes les données existantes</div>
<div style="left:56px;top:577.0px;font-size:12.8px;line-height:15px;white-space:pre;color:#000">– Ctrl-A_Cmd-A sur Mac_ et la touche d&#x27;effacement feront cela)</div>
<div style="left:56px;top:591.9px;font-size:12.8px;line-height:15px;white-space:pre;color:#000">Chaque colonne doit avoir un titre dans la ligne 1 et ensuite autant de valeurs</div>
<div style="left:56px;top:606.8px;font-size:12.8px;line-height:15px;white-space:pre;color:#000">de données qu&#x27;il est nécessaire ; il n&#x27;est pas obligatoire que le nombre</div>
<div style="left:56px;top:621.7px;font-size:12.8px;line-height:15px;white-space:pre;color:#000">d&#x27;éléments soit le même dans chaque colonne.</div>
<div style="left:56px;top:636.6px;font-size:12.8px;line-height:15px;white-space:pre;color:#000">Lorsqu&quot; tout est prêt, revenez sur cette feuille et cliquez sur “Obtenir les</div>
<div style="left:56px;top:651.5px;font-size:12.8px;line-height:15px;white-space:pre;color:#000">valeurs depuis les données brutes”</div>
<div style="left:56px;top:666.4px;font-size:12.8px;line-height:15px;white-space:pre;color:#000">Entrez un nom pour les axes et cliquez sur “Tracer les diagrammes en boîtes&quot;</div>
<div style="left:54px;top:711px;width:458px;height:1px;border-top:1px dashed #000"></div>
<div style="left:512px;top:394px;width:1px;height:321px;background:repeating-linear-gradient(#000 -14px,#000 7px,#fff 7px,#fff 9px)"></div>
<div style="left:590px;top:394px;width:85px;height:19px;border:2px solid #000"></div>
<div style="left:672px;top:411px;width:5px;height:6px;background:#000"></div>
<div style="left:673px;top:411px;width:2px;height:2px;background:#fff"></div>
</body></html>
